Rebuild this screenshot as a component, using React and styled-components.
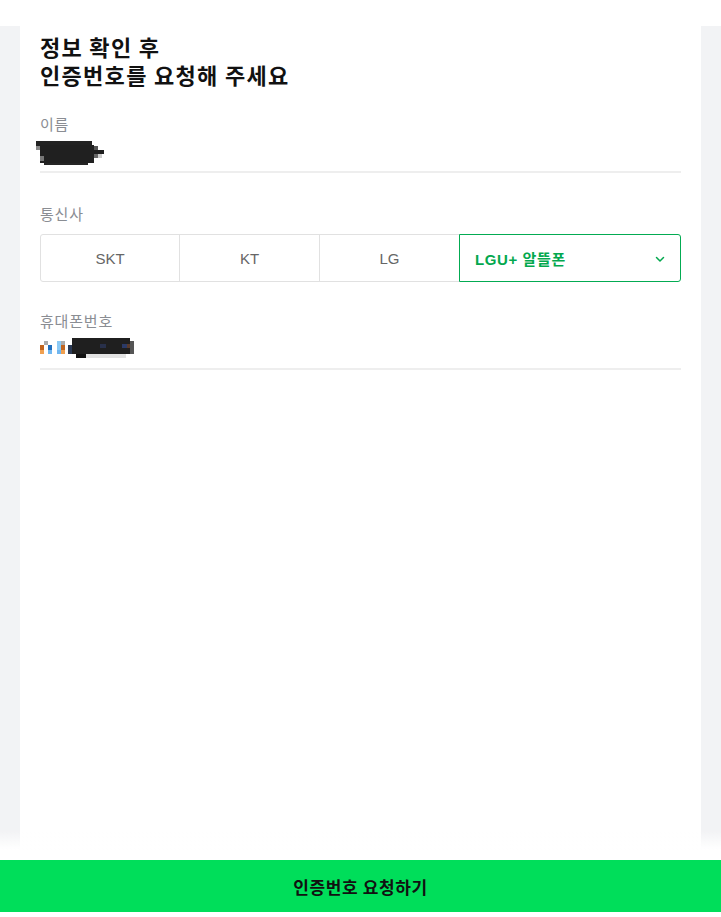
import React, { useState } from "react";
import styled, { createGlobalStyle } from "styled-components";

const GlobalStyle = createGlobalStyle`
  html, body {
    margin: 0;
    padding: 0;
    background: #ffffff;
  }
  body {
    font-family: "Liberation Sans", "Noto Sans CJK KR", sans-serif;
    color: #191919;
    -webkit-font-smoothing: antialiased;
  }
  * {
    box-sizing: border-box;
  }
`;

const Page = styled.div`
  min-height: 917px;
  display: flex;
  flex-direction: column;
  background: #ffffff;
`;

const TopBar = styled.div`
  height: 26px;
  flex-shrink: 0;
  background: #ffffff;
`;

const Main = styled.main`
  flex: 1;
  display: flex;
  padding: 0 20px 60px;
  background: #f2f3f5;
`;

const Card = styled.section`
  flex: 1;
  background: #ffffff;
  padding: 6px 20px 0;
  display: flex;
  flex-direction: column;
`;

const Title = styled.h1`
  margin: 0;
  font-family: "Noto Sans CJK KR", sans-serif;
  font-size: 22px;
  line-height: 28px;
  font-weight: 700;
  color: #111111;
  letter-spacing: 1.3px;
`;

const Field = styled.div`
  display: flex;
  flex-direction: column;
  margin-top: ${({ gap }) => gap}px;
`;

const Label = styled.div`
  font-family: "Noto Sans CJK KR", sans-serif;
  font-size: 15px;
  line-height: 20px;
  letter-spacing: 0.8px;
  color: #8a8d93;
`;

const ValueRow = styled.div`
  height: 39px;
  padding-top: ${({ offset }) => offset}px;
  border-bottom: 2px solid #eeeeee;
`;

const Mosaic = styled.svg`
  display: block;
  margin-left: ${({ shift }) => shift || 0}px;
`;

const Segment = styled.div`
  display: grid;
  grid-template-columns: 140px 140px 140px 1fr;
  margin-top: 10px;
  height: 48px;
`;

const Option = styled.button`
  position: relative;
  display: flex;
  align-items: center;
  justify-content: ${({ selected }) => (selected ? "space-between" : "center")};
  padding: ${({ selected }) => (selected ? "0 14px 0 15px" : "0")};
  margin-left: ${({ first }) => (first ? "0" : "-1px")};
  border: 1px solid ${({ selected }) => (selected ? "#03ab52" : "#e1e1e1")};
  border-radius: ${({ first, last }) =>
    first ? "3px 0 0 3px" : last ? "0 3px 3px 0" : "0"};
  background: #ffffff;
  z-index: ${({ selected }) => (selected ? 1 : 0)};
  font-family: "Liberation Sans", "Noto Sans CJK KR", sans-serif;
  font-size: 15px;
  font-weight: ${({ selected }) => (selected ? 700 : 400)};
  letter-spacing: ${({ selected }) => (selected ? "0.6px" : "0")};
  color: ${({ selected }) => (selected ? "#03a84e" : "#666666")};
  cursor: pointer;
`;

const Chevron = styled.svg`
  width: 12px;
  height: 12px;
  margin-top: 1px;
`;

const Footer = styled.div`
  position: fixed;
  left: 0;
  right: 0;
  bottom: 0;
  display: flex;
  flex-direction: column;
  padding-top: 30px;
  padding-bottom: 5px;
  background: linear-gradient(
    to bottom,
    rgba(255, 255, 255, 0) 0px,
    #ffffff 20px
  );
`;

const SubmitButton = styled.button`
  height: 52px;
  border: 0;
  background: #00de5a;
  font-family: "Noto Sans CJK KR", sans-serif;
  font-size: 17px;
  font-weight: 700;
  letter-spacing: 0.6px;
  color: #111111;
  cursor: pointer;
`;

const carriers = ["SKT", "KT", "LG", "LGU+ 알뜰폰"];

const NameMosaic = () => (
  <Mosaic width="72" height="26" viewBox="0 0 72 26" shift={-4}>
    <rect x="0" y="0" width="56" height="5" fill="#222" />
    <rect x="4" y="4" width="54" height="18" fill="#202020" />
    <rect x="58" y="5" width="4" height="4" fill="#555" />
    <rect x="58" y="9" width="10" height="4" fill="#1e1e1e" />
    <rect x="58" y="13" width="4" height="4" fill="#666" />
    <rect x="0" y="5" width="4" height="4" fill="#888" />
    <rect x="8" y="22" width="44" height="2" fill="#252525" />
    <rect x="4" y="15" width="4" height="5" fill="#777" />
    <rect x="62" y="13" width="4" height="4" fill="#ccc" />
  </Mosaic>
);

const PhoneMosaic = () => (
  <Mosaic width="96" height="20" viewBox="0 0 96 20">
    <rect x="4" y="3" width="4" height="4" fill="#aaa" />
    <rect x="0" y="7" width="4" height="5" fill="#c0641e" />
    <rect x="0" y="12" width="4" height="4" fill="#f0a050" />
    <rect x="8" y="7" width="4" height="5" fill="#1f6fc0" />
    <rect x="8" y="12" width="4" height="4" fill="#6fb6f0" />
    <rect x="17" y="3" width="4" height="9" fill="#8ccaf5" />
    <rect x="17" y="12" width="4" height="4" fill="#6fb6f0" />
    <rect x="21" y="3" width="4" height="4" fill="#aaa" />
    <rect x="21" y="7" width="4" height="5" fill="#c0641e" />
    <rect x="21" y="12" width="4" height="4" fill="#f0a050" />
    <rect x="28" y="7" width="4" height="9" fill="#2b3a55" />
    <rect x="32" y="0" width="58" height="16" fill="#1f1f1f" />
    <rect x="60" y="6" width="6" height="4" fill="#28304a" />
    <rect x="82" y="6" width="5" height="4" fill="#2b3a66" />
    <rect x="87" y="6" width="4" height="4" fill="#5a3a2a" />
    <rect x="90" y="3" width="4" height="13" fill="#555" />
    <rect x="36" y="16" width="10" height="4" fill="#111" />
    <rect x="46" y="16" width="40" height="4" fill="#e2e2e2" />
  </Mosaic>
);

export default function App() {
  const [carrier, setCarrier] = useState(3);

  return (
    <Page>
      <GlobalStyle />
      <TopBar />
      <Main>
        <Card>
          <Title>
            정보 확인 후
            <br />
            인증번호를 요청해 주세요
          </Title>

          <Field gap={26}>
            <Label>이름</Label>
            <ValueRow offset={7}>
              <NameMosaic />
            </ValueRow>
          </Field>

          <Field gap={31}>
            <Label>통신사</Label>
            <Segment>
              {carriers.map((name, i) => (
                <Option
                  key={name}
                  first={i === 0}
                  last={i === carriers.length - 1}
                  selected={carrier === i}
                  onClick={() => setCarrier(i)}
                >
                  {name}
                  {i === 3 && (
                    <Chevron viewBox="0 0 12 12" fill="none">
                      <path
                        d="M2.5 4.5 L6 8 L9.5 4.5"
                        stroke="#03a84e"
                        strokeWidth="1.5"
                        strokeLinecap="round"
                        strokeLinejoin="round"
                      />
                    </Chevron>
                  )}
                </Option>
              ))}
            </Segment>
          </Field>

          <Field gap={29}>
            <Label>휴대폰번호</Label>
            <ValueRow offset={7}>
              <PhoneMosaic />
            </ValueRow>
          </Field>
        </Card>
      </Main>
      <Footer>
        <SubmitButton>인증번호 요청하기</SubmitButton>
      </Footer>
    </Page>
  );
}
